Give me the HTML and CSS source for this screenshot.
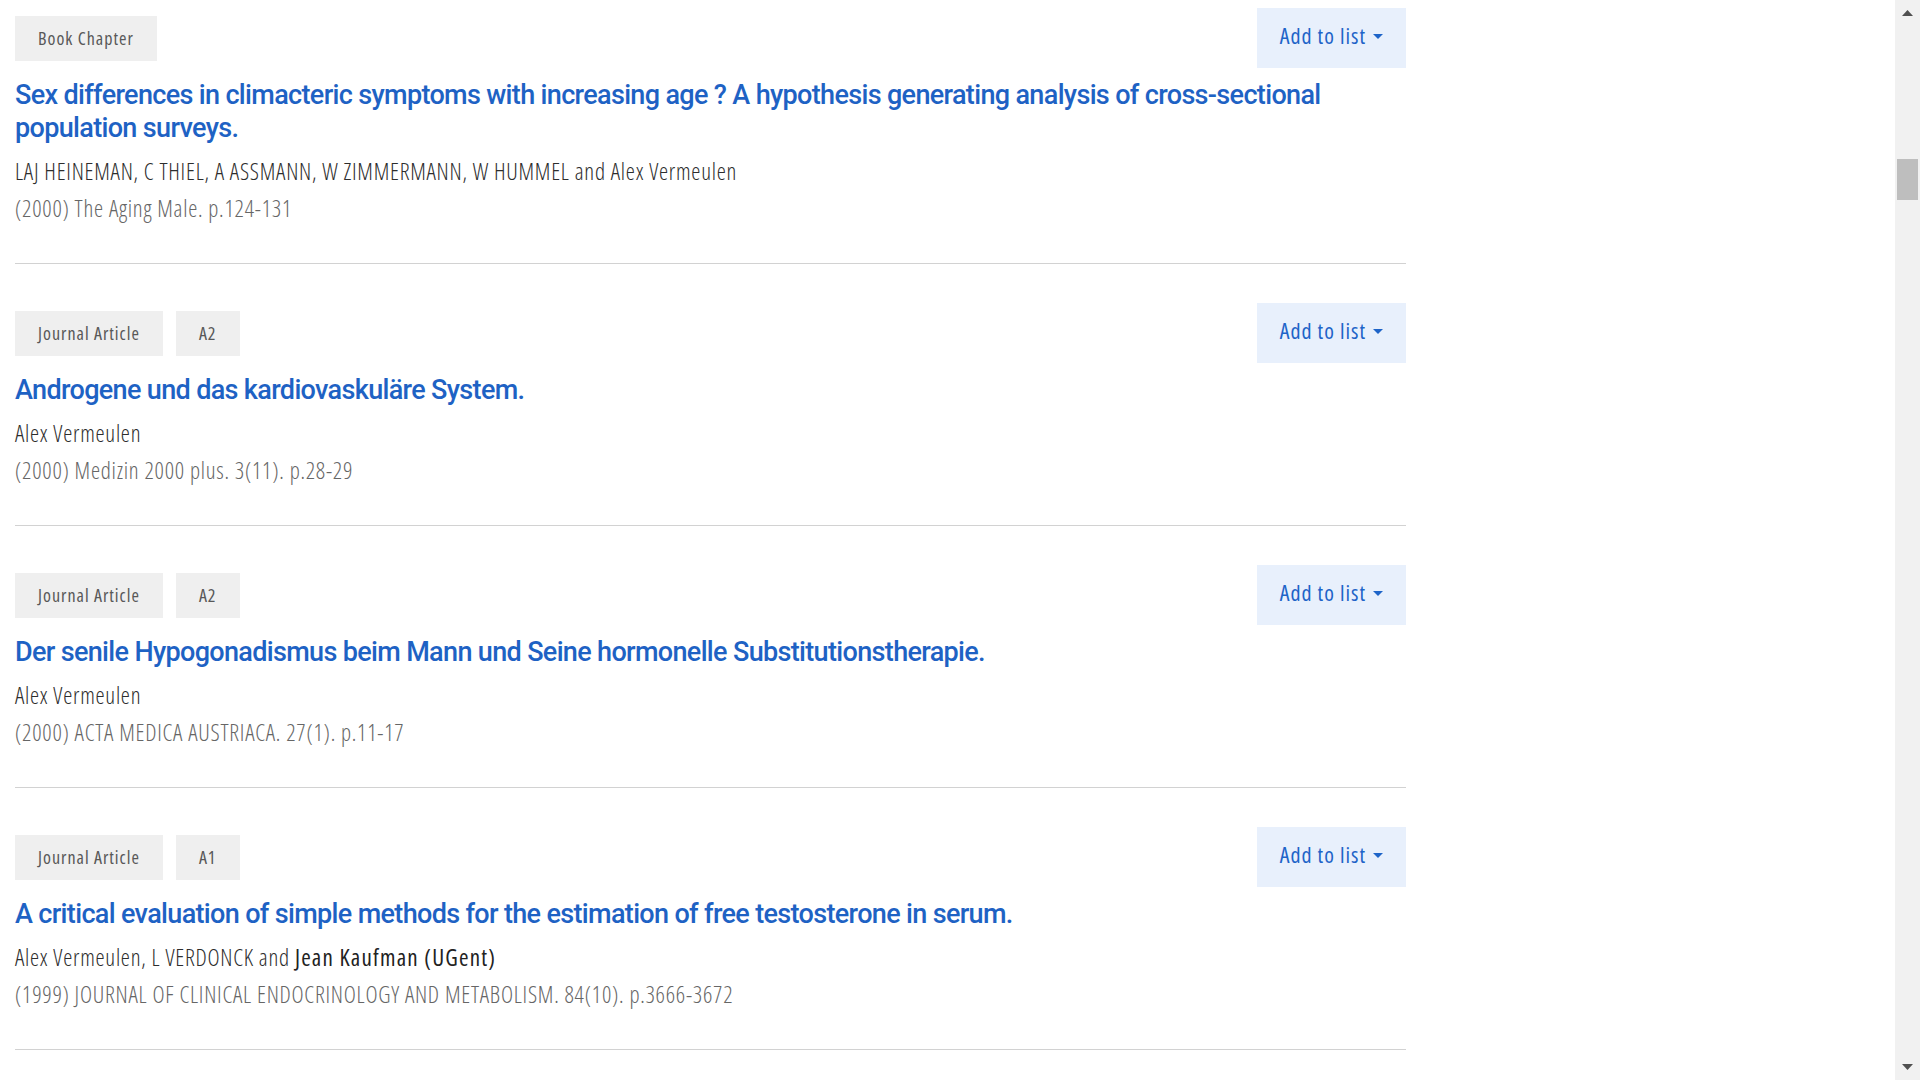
FILE: index.html
```html
<!DOCTYPE html>
<html lang="en">
<head>
<meta charset="utf-8">
<title>Publications</title>
<link rel="stylesheet" href="styles.css">
</head>
<body>
<div class="page">
  <main class="main">
    <div class="list">
      <div class="entry">
        <div class="entry-head">
          <div class="badges"><span class="badge">Book Chapter</span></div>
          <button class="add-btn">Add to list <svg class="caret" width="10" height="5" viewBox="0 0 10 5"><path d="M0 0H10L5 5Z" fill="#1e64c8"/></svg></button>
        </div>
        <a class="title" href="#">Sex differences in climacteric symptoms with increasing age ? A hypothesis generating analysis of cross-sectional population surveys.</a>
        <div class="authors">LAJ HEINEMAN, C THIEL, A ASSMANN, W ZIMMERMANN, W HUMMEL and Alex Vermeulen</div>
        <div class="source">(2000) The Aging Male. p.124-131</div>
      </div>
      <div class="entry">
        <div class="entry-head">
          <div class="badges"><span class="badge">Journal Article</span><span class="badge">A2</span></div>
          <button class="add-btn">Add to list <svg class="caret" width="10" height="5" viewBox="0 0 10 5"><path d="M0 0H10L5 5Z" fill="#1e64c8"/></svg></button>
        </div>
        <a class="title" href="#">Androgene und das kardiovaskuläre System.</a>
        <div class="authors">Alex Vermeulen</div>
        <div class="source">(2000) Medizin 2000 plus. 3(11). p.28-29</div>
      </div>
      <div class="entry">
        <div class="entry-head">
          <div class="badges"><span class="badge">Journal Article</span><span class="badge">A2</span></div>
          <button class="add-btn">Add to list <svg class="caret" width="10" height="5" viewBox="0 0 10 5"><path d="M0 0H10L5 5Z" fill="#1e64c8"/></svg></button>
        </div>
        <a class="title" href="#">Der senile Hypogonadismus beim Mann und Seine hormonelle Substitutionstherapie.</a>
        <div class="authors">Alex Vermeulen</div>
        <div class="source">(2000) ACTA MEDICA AUSTRIACA. 27(1). p.11-17</div>
      </div>
      <div class="entry">
        <div class="entry-head">
          <div class="badges"><span class="badge">Journal Article</span><span class="badge">A1</span></div>
          <button class="add-btn">Add to list <svg class="caret" width="10" height="5" viewBox="0 0 10 5"><path d="M0 0H10L5 5Z" fill="#1e64c8"/></svg></button>
        </div>
        <a class="title" href="#">A critical evaluation of simple methods for the estimation of free testosterone in serum.</a>
        <div class="authors">Alex Vermeulen, L VERDONCK and <strong class="ugent">Jean Kaufman (UGent)</strong></div>
        <div class="source">(1999) JOURNAL OF CLINICAL ENDOCRINOLOGY AND METABOLISM. 84(10). p.3666-3672</div>
      </div>
    </div>
  </main>
  <aside class="scrollbar">
    <svg class="sb-arrow" width="11" height="6" viewBox="0 0 11 6"><path d="M0 6L5.5 0L11 6Z" fill="#505050"/></svg>
    <div class="sb-track"><div class="sb-thumb"></div></div>
    <svg class="sb-arrow" width="11" height="6" viewBox="0 0 11 6"><path d="M0 0H11L5.5 6Z" fill="#505050"/></svg>
  </aside>
</div>
</body>
</html>
```

FILE: styles.css
```css
html, body {
  margin: 0;
  padding: 0;
  height: 100%;
  overflow: hidden;
  background: #fff;
}

body {
  font-family: "Open Sans", "Liberation Sans", sans-serif;
  font-stretch: 75%;
  color: #2d2d2d;
}

.page {
  display: flex;
  height: 100vh;
}

.main {
  flex: 1;
  overflow: hidden;
}

.list {
  width: 1391px;
  margin-left: 15px;
  padding-top: 8px;
}

.entry {
  border-bottom: 1px solid #d2d2d2;
  padding-bottom: 36px;
  margin-bottom: 39px;
}

.entry-head {
  display: flex;
  justify-content: space-between;
  align-items: center;
  height: 60px;
}

.badges {
  display: flex;
  gap: 13px;
}

.badge {
  display: inline-flex;
  align-items: center;
  height: 45px;
  padding: 0 23px;
  background: #efefef;
  color: #585858;
  font-size: 18px;
  font-weight: 400;
  letter-spacing: 1px;
  box-sizing: border-box;
}

.add-btn {
  display: inline-flex;
  align-items: center;
  gap: 7px;
  height: 60px;
  padding: 0 23px 6px;
  box-sizing: border-box;
  border: 0;
  background: #e8f0fc;
  color: #1e64c8;
  font-family: inherit;
  font-stretch: 75%;
  font-size: 22px;
  font-weight: 400;
  letter-spacing: 1px;
  cursor: pointer;
}

.caret {
  display: block;
  margin-top: 3px;
}

.title {
  display: block;
  margin-top: 11px;
  color: #1e62c4;
  font-family: Roboto, "Liberation Sans", sans-serif;
  font-stretch: normal;
  font-size: 27px;
  font-weight: 500;
  letter-spacing: -0.66px;
  line-height: 33px;
  text-decoration: none;
}

.authors {
  margin-top: 8px;
  font-size: 23px;
  font-weight: 300;
  letter-spacing: 0.75px;
  line-height: 37px;
  color: #2d2d2d;
}

.ugent {
  font-weight: 500;
  letter-spacing: 1.2px;
  color: #222;
}

.source {
  font-size: 23px;
  font-weight: 300;
  letter-spacing: 0.75px;
  line-height: 37px;
  color: #666;
}

.scrollbar {
  width: 25px;
  background: #f1f1f1;
  display: flex;
  flex-direction: column;
  align-items: center;
  padding: 10px 0 10px;
  box-sizing: border-box;
}

.sb-arrow {
  display: block;
  flex: none;
}

.sb-track {
  flex: 1;
  width: 100%;
  display: flex;
  justify-content: center;
}

.sb-thumb {
  width: 21px;
  height: 41px;
  margin-top: 143px;
  background: #bebebe;
}
```
